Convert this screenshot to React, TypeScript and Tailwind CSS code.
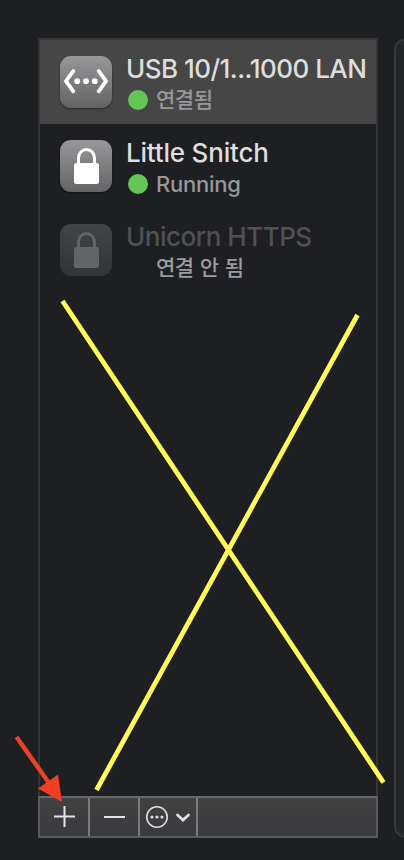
import { ReactNode } from "react";
import clsx from "clsx";

type Service = {
  name: string;
  status: string;
  icon: "ethernet" | "lock";
  connected: boolean;
  selected?: boolean;
  nameClass: string;
  statusClass: string;
};

const services: Service[] = [
  {
    name: "USB 10/1...1000 LAN",
    status: "연결됨",
    icon: "ethernet",
    connected: true,
    selected: true,
    nameClass: "tracking-[-0.52px]",
    statusClass: "text-[21px] tracking-[-0.5px]",
  },
  {
    name: "Little Snitch",
    status: "Running",
    icon: "lock",
    connected: true,
    nameClass: "tracking-[-0.2px]",
    statusClass: "text-[22px] tracking-[-0.25px]",
  },
  {
    name: "Unicorn HTTPS",
    status: "연결 안 됨",
    icon: "lock",
    connected: false,
    nameClass: "tracking-[-0.48px]",
    statusClass: "text-[21px] tracking-[-0.5px] [word-spacing:1px]",
  },
];

function EthernetIcon() {
  return (
    <svg viewBox="0 0 52 52" className="size-full" fill="none">
      <path
        d="M13.3 15L6 25.2L13.3 35.3M38.7 15L46 25.2L38.7 35.3"
        stroke="#fff"
        strokeWidth="3.8"
        strokeLinecap="round"
        strokeLinejoin="round"
      />
      <circle cx="17.2" cy="25.2" r="2.9" fill="#fff" />
      <circle cx="26" cy="25.2" r="2.9" fill="#fff" />
      <circle cx="34.8" cy="25.2" r="2.9" fill="#fff" />
    </svg>
  );
}

function LockIcon({ color }: { color: string }) {
  return (
    <svg viewBox="0 0 52 52" className="size-full" fill="none">
      <path
        d="M18.5 25V18A8 8.5 0 0 1 34.5 18V25"
        stroke={color}
        strokeWidth="3"
      />
      <rect x="14" y="23" width="25" height="21" rx="2.5" fill={color} />
    </svg>
  );
}

function ServiceRow({ service }: { service: Service }) {
  const { name, status, icon, connected, selected } = service;

  return (
    <li
      className={clsx(
        "flex h-[84px] pt-4 pl-5",
        selected && "bg-[#464646]"
      )}
    >
      <div
        className={clsx(
          "size-[52px] shrink-0 rounded-[11px] bg-linear-to-b",
          connected
            ? "from-[#98989b] to-[#636466] shadow-[0_1px_2px_rgba(0,0,0,0.45)]"
            : "from-[#434446] to-[#333436]"
        )}
      >
        {icon === "ethernet" ? (
          <EthernetIcon />
        ) : (
          <LockIcon color={connected ? "#fff" : "#636466"} />
        )}
      </div>
      <div className="ml-[14px] font-medium whitespace-nowrap">
        <p
          className={clsx(
            "-mt-[3px] h-8 text-[26px] leading-8",
            connected ? "text-[#dedede]" : "text-[#505153]",
            service.nameClass
          )}
        >
          {name}
        </p>
        <div className="flex h-[30px] items-center pl-[2px]">
          <span
            className={clsx(
              "size-5 shrink-0 rounded-full",
              connected && "bg-[#62c554]"
            )}
          />
          <span
            className={clsx(
              "ml-2 leading-[30px]",
              connected ? "text-[#98989a]" : "text-[#9c9c9e]",
              service.statusClass
            )}
          >
            {status}
          </span>
        </div>
      </div>
    </li>
  );
}

function ToolButton({ className, children }: { className: string; children: ReactNode }) {
  return (
    <button className={clsx("h-full border-r-2 border-[#7b7b7c]", className)}>
      {children}
    </button>
  );
}

function Toolbar() {
  return (
    <div className="flex h-[42px] border-2 border-[#5a5b5d] border-t-[#68696a] bg-linear-to-b from-[#414142] to-[#393a3d]">
      <ToolButton className="w-[50px]">
        <svg viewBox="0 0 48 38" className="h-[38px] w-12" stroke="#e4e4e4" strokeWidth="2">
          <path d="M14 18.5H35M24.5 8V29" />
        </svg>
      </ToolButton>
      <ToolButton className="w-[50px]">
        <svg viewBox="0 0 48 38" className="h-[38px] w-12" stroke="#e4e4e4" strokeWidth="2">
          <path d="M14 19H35" />
        </svg>
      </ToolButton>
      <ToolButton className="w-[58px]">
        <svg viewBox="0 0 56 38" className="h-[38px] w-14" fill="none">
          <circle cx="17" cy="19" r="10.2" stroke="#dedede" strokeWidth="1.6" />
          <circle cx="12" cy="19" r="1.6" fill="#dedede" />
          <circle cx="17" cy="19" r="1.6" fill="#dedede" />
          <circle cx="22" cy="19" r="1.6" fill="#dedede" />
          <path
            d="M37.5 17L43 22L48.5 17"
            stroke="#dedede"
            strokeWidth="2.8"
            strokeLinecap="round"
          />
        </svg>
      </ToolButton>
    </div>
  );
}

// hand drawn marks over the window
function Annotations() {
  return (
    <svg viewBox="0 0 404 860" className="pointer-events-none absolute inset-0 h-[860px] w-[404px]">
      <path d="M62.5 301L383.5 782.5M357.5 315L96.5 790" stroke="#fffb54" strokeWidth="4.8" />
      <path d="M16.5 737L49 783" stroke="#ee4026" strokeWidth="4.4" />
      <path d="M62 802L38 788.5L58 774.5Z" fill="#ee4026" />
    </svg>
  );
}

export default function App() {
  return (
    <div className="relative flex h-[860px] w-[404px] overflow-hidden bg-[#1e1f23] pt-[38px] pl-[38px] font-['Inter','Noto_Sans_CJK_KR',sans-serif]">
      <div className="flex h-[800px] w-[340px] shrink-0 flex-col">
        <ul className="flex-1 border-x-2 border-t-2 border-[#363636]">
          {services.map((service) => (
            <ServiceRow key={service.name} service={service} />
          ))}
        </ul>
        <Toolbar />
      </div>
      <div className="ml-4 h-[800px] w-10 shrink-0 rounded-l-xl border-2 border-[#37383b] bg-[#242529]" />
      <Annotations />
    </div>
  );
}
